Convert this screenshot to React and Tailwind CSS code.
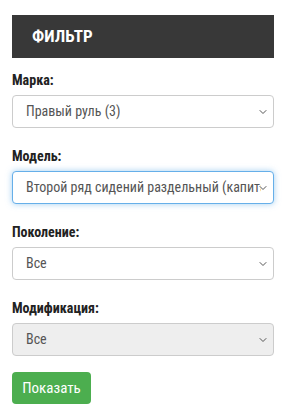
import { ChevronDown } from "lucide-react";

const font = { fontFamily: '"Roboto Condensed", "Liberation Sans Narrow", "Arial Narrow", sans-serif' };

function Field({ label, value, focused, disabled }) {
  return (
    <div className="mb-[18px]">
      <div className="text-[14px] font-bold text-[#222] leading-[20px] mb-[5px]">{label}</div>
      <div
        className={
          "relative h-[33px] rounded-[4px] border flex items-center pl-[13px] pr-[12px] " +
          (focused
            ? "border-[#66afe9] shadow-[0_0_6px_rgba(102,175,233,0.6)] bg-white"
            : disabled
            ? "border-[#ccc] bg-[#eee]"
            : "border-[#ccc] bg-white")
        }
      >
        <span className="text-[14px] text-[#555] whitespace-nowrap overflow-hidden">{value}</span>
        <ChevronDown className="absolute right-[4px] top-1/2 -translate-y-1/2 text-[#555]" size={12} strokeWidth={2} />
      </div>
    </div>
  );
}

export default function App() {
  return (
    <div className="w-[286px] h-[410px] bg-white px-[12px] pt-[15px] overflow-hidden" style={font}>
      <div className="h-[43px] bg-[#383838] flex items-center pl-[20px] mb-[12px]">
        <span className="text-white text-[17px] font-bold">ФИЛЬТР</span>
      </div>
      <Field label="Марка:" value="Правый руль (3)" />
      <Field label="Модель:" value="Второй ряд сидений раздельный (капитанские кресла)" focused />
      <Field label="Поколение:" value="Все" />
      <Field label="Модификация:" value="Все" disabled />
      <button className="h-[32px] w-[79px] rounded-[4px] bg-[#4cae4f] text-white text-[15px] -mt-[2px]">
        Показать
      </button>
    </div>
  );
}
